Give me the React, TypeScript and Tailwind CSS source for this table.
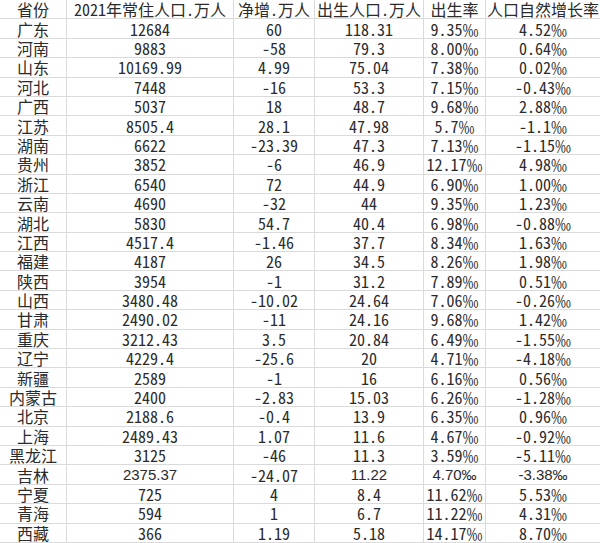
import React from "react";

const rows: string[][] = [
  ["广东", "12684", "60", "118.31", "9.35‰", "4.52‰"],
  ["河南", "9883", "-58", "79.3", "8.00‰", "0.64‰"],
  ["山东", "10169.99", "4.99", "75.04", "7.38‰", "0.02‰"],
  ["河北", "7448", "-16", "53.3", "7.15‰", "-0.43‰"],
  ["广西", "5037", "18", "48.7", "9.68‰", "2.88‰"],
  ["江苏", "8505.4", "28.1", "47.98", "5.7‰", "-1.1‰"],
  ["湖南", "6622", "-23.39", "47.3", "7.13‰", "-1.15‰"],
  ["贵州", "3852", "-6", "46.9", "12.17‰", "4.98‰"],
  ["浙江", "6540", "72", "44.9", "6.90‰", "1.00‰"],
  ["云南", "4690", "-32", "44", "9.35‰", "1.23‰"],
  ["湖北", "5830", "54.7", "40.4", "6.98‰", "-0.88‰"],
  ["江西", "4517.4", "-1.46", "37.7", "8.34‰", "1.63‰"],
  ["福建", "4187", "26", "34.5", "8.26‰", "1.98‰"],
  ["陕西", "3954", "-1", "31.2", "7.89‰", "0.51‰"],
  ["山西", "3480.48", "-10.02", "24.64", "7.06‰", "-0.26‰"],
  ["甘肃", "2490.02", "-11", "24.16", "9.68‰", "1.42‰"],
  ["重庆", "3212.43", "3.5", "20.84", "6.49‰", "-1.55‰"],
  ["辽宁", "4229.4", "-25.6", "20", "4.71‰", "-4.18‰"],
  ["新疆", "2589", "-1", "16", "6.16‰", "0.56‰"],
  ["内蒙古", "2400", "-2.83", "15.03", "6.26‰", "-1.28‰"],
  ["北京", "2188.6", "-0.4", "13.9", "6.35‰", "0.96‰"],
  ["上海", "2489.43", "1.07", "11.6", "4.67‰", "-0.92‰"],
  ["黑龙江", "3125", "-46", "11.3", "3.59‰", "-5.11‰"],
  ["吉林", "2375.37", "-24.07", "11.22", "4.70‰", "-3.38‰"],
  ["宁夏", "725", "4", "8.4", "11.62‰", "5.53‰"],
  ["青海", "594", "1", "6.7", "11.22‰", "4.31‰"],
  ["西藏", "366", "1.19", "5.18", "14.17‰", "8.70‰"],
];

const header = ["省份", "2021年常住人口.万人", "净增.万人", "出生人口.万人", "出生率", "人口自然增长率"];

const arialCells = new Set(["吉林-1", "吉林-3", "吉林-4", "吉林-5"]);

export default function App() {
  const all = [header, ...rows];
  return (
    <div
      className="w-[600px] h-[543px] bg-white text-[#2b2b2b] text-[16px] leading-[16px] grid grid-cols-[67px_167px_81px_109px_62px_114px] grid-rows-[repeat(28,minmax(0,1fr))]"
      style={{ fontFamily: '"Noto Sans Mono CJK SC", "Noto Sans CJK SC", monospace' }}
    >
      {all.map((r, ri) =>
        r.map((c, ci) => (
          <div
            key={`${ri}-${ci}`}
            className={
              "flex items-center justify-center whitespace-nowrap border-[#dadada] border-b " +
              (ci < 5 ? "border-r " : "") +
              (arialCells.has(`${r[0]}-${ci}`) ? "font-['Liberation_Sans'] text-[15px]" : "")
            }
          >
            {c}
          </div>
        ))
      )}
    </div>
  );
}
